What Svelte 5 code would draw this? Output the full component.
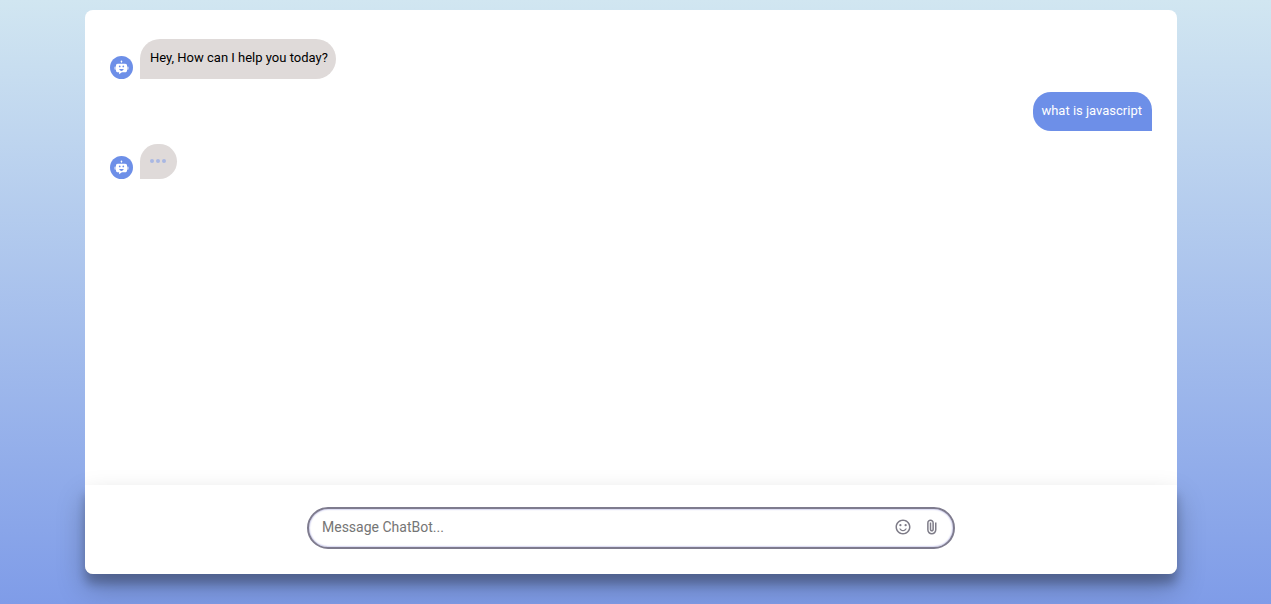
<script>
  let messages = [
    { from: 'bot', text: 'Hey, How can I help you today?' },
    { from: 'user', text: 'what is javascript' },
    { from: 'bot', typing: true }
  ];
  let draft = '';

  function send() {
    const text = draft.trim();
    if (!text) return;
    messages = [...messages.filter((m) => !m.typing), { from: 'user', text }, { from: 'bot', typing: true }];
    draft = '';
  }
</script>

<main class="page">
  <section class="chat" aria-label="ChatBot">
    <div class="messages" aria-live="polite">
      {#each messages as message}
        <div class="message {message.from}">
          {#if message.from === 'bot'}
            <svg class="avatar" viewBox="0 0 1024 1024" aria-hidden="true">
              <path d="M738.3 287.6H285.7c-59 0-106.8 47.8-106.8 106.8v303.1c0 59 47.8 106.8 106.8 106.8h81.5v111.1c0 .7.8 1.1 1.4.7l166.9-110.6 41.8-.8h117.4l43.6-.4c59 0 106.8-47.8 106.8-106.8V394.5c0-59-47.8-106.9-106.8-106.9zM351.7 448.2c0-29.5 23.9-53.5 53.5-53.5s53.5 23.9 53.5 53.5-23.9 53.5-53.5 53.5-53.5-23.9-53.5-53.5zm157.9 267.1c-67.8 0-123.8-47.5-132.3-109h264.6c-8.6 61.5-64.5 109-132.3 109zm110-213.7c-29.5 0-53.5-23.9-53.5-53.5s23.9-53.5 53.5-53.5 53.5 23.9 53.5 53.5-23.9 53.5-53.5 53.5zM867.2 644.5V453.1h26.5c19.4 0 35.1 15.7 35.1 35.1v121.1c0 19.4-15.7 35.1-35.1 35.1h-26.5zM95.2 609.4V488.2c0-19.4 15.7-35.1 35.1-35.1h26.5v191.3h-26.5c-19.4 0-35.1-15.7-35.1-35.1zM561.5 149.6c0 23.4-15.6 43.3-36.9 49.7v44.9h-30v-44.9c-21.4-6.5-36.9-26.3-36.9-49.7 0-28.6 23.3-51.9 51.9-51.9s51.9 23.3 51.9 51.9z" />
            </svg>
          {/if}
          {#if message.typing}
            <div class="bubble typing" role="status" aria-label="Typing">
              <span></span><span></span><span></span>
            </div>
          {:else}
            <div class="bubble">{message.text}</div>
          {/if}
        </div>
      {/each}
    </div>

    <footer class="composer">
      <form class="field" on:submit|preventDefault={send}>
        <input type="text" aria-label="Message ChatBot" placeholder="Message ChatBot..." bind:value={draft} />
        <button type="button" aria-label="Add emoji">
          <svg viewBox="0 0 24 24" aria-hidden="true">
            <circle cx="15.5" cy="9.5" r="1.5" />
            <circle cx="8.5" cy="9.5" r="1.5" />
            <path d="M11.99 2C6.47 2 2 6.48 2 12s4.47 10 9.99 10C17.52 22 22 17.52 22 12S17.52 2 11.99 2zM12 20c-4.42 0-8-3.58-8-8s3.58-8 8-8 8 3.58 8 8-3.58 8-8 8zM12 17.5c2.33 0 4.31-1.46 5.11-3.5h-1.67c-.69 1.19-1.97 2-3.44 2s-2.75-.81-3.44-2H6.89c.8 2.04 2.78 3.5 5.11 3.5z" />
          </svg>
        </button>
        <button type="button" aria-label="Attach file">
          <svg viewBox="0 0 24 24" aria-hidden="true">
            <path d="M18 15.75q0 2.6-1.825 4.425T11.75 22t-4.425-1.825T5.5 15.75V6.5q0-1.875 1.313-3.187T10 2t3.188 1.313T14.5 6.5v8.75q0 1.15-.8 1.95t-1.95.8-1.95-.8-.8-1.95V6h2v9.25q0 .325.213.537t.537.213.537-.213.213-.537V6.5q-.025-1.05-.737-1.775T10 4t-1.775.725T7.5 6.5v9.25q-.025 1.775 1.225 3.013T11.75 20q1.75 0 2.975-1.237T16 15.75V6h2z" />
          </svg>
        </button>
      </form>
    </footer>
  </section>
</main>

<style>
  :global(body) {
    margin: 0;
  }

  .page {
    box-sizing: border-box;
    min-height: 100vh;
    display: flex;
    justify-content: center;
    padding: 10px 94px 30px 85px;
    background: linear-gradient(#d1e6f1, #7f9ce8);
    font-family: Roboto, "Liberation Sans", sans-serif;
  }

  .chat {
    flex: 1;
    min-width: 0;
    display: flex;
    flex-direction: column;
    border-radius: 8px;
    background: #fff;
  }

  .messages {
    flex: 1;
    display: flex;
    flex-direction: column;
    gap: 13px;
    padding: 29px 25px;
  }

  .message {
    display: flex;
    align-items: flex-end;
    gap: 7px;
  }

  .message.user {
    justify-content: flex-end;
  }

  .avatar {
    box-sizing: border-box;
    flex: none;
    width: 23px;
    height: 23px;
    padding: 3px;
    border-radius: 50%;
    background: #6d8fe8;
    fill: #fff;
  }

  .bubble {
    max-width: 75%;
    padding: 9px 8px 11px 10px;
    border-radius: 20px 20px 20px 0;
    background: #dfdad9;
    color: #000;
    font-size: 13px;
    line-height: 20px;
  }

  .user .bubble {
    padding: 9px 10px 10px 8px;
    border-radius: 18px 18px 0 18px;
    background: #6d8fe8;
    color: #fff;
  }

  .bubble.typing {
    display: flex;
    gap: 2px;
    padding: 15px 11px 16px 10px;
  }

  .typing span {
    width: 4px;
    height: 4px;
    border-radius: 50%;
    background: #a9b7e3;
  }

  .composer {
    display: flex;
    justify-content: center;
    padding: 22px 24px 25px;
    border-radius: 0 0 8px 8px;
    background: #fff;
    box-shadow: 0 14px 28px rgba(0, 0, 0, 0.25), 0 10px 10px rgba(0, 0, 0, 0.22);
  }

  .field {
    box-sizing: border-box;
    display: flex;
    align-items: center;
    gap: 11px;
    width: 100%;
    max-width: 648px;
    height: 42px;
    padding: 0 12px 2px 13px;
    border: 2px solid #7e7b8e;
    border-radius: 21px;
    box-shadow: inset 0 0 2px #8080d0;
  }

  .field input {
    flex: 1;
    min-width: 0;
    padding: 0;
    border: 0;
    outline: 0;
    background: none;
    color: #222;
    font: 14px/20px Roboto, "Liberation Sans", sans-serif;
  }

  .field input::placeholder {
    color: #757575;
    opacity: 1;
  }

  .field button {
    display: flex;
    padding: 0;
    border: 0;
    background: none;
    cursor: pointer;
  }

  .field svg {
    width: 18px;
    height: 18px;
    fill: #7e7c88;
  }
</style>
